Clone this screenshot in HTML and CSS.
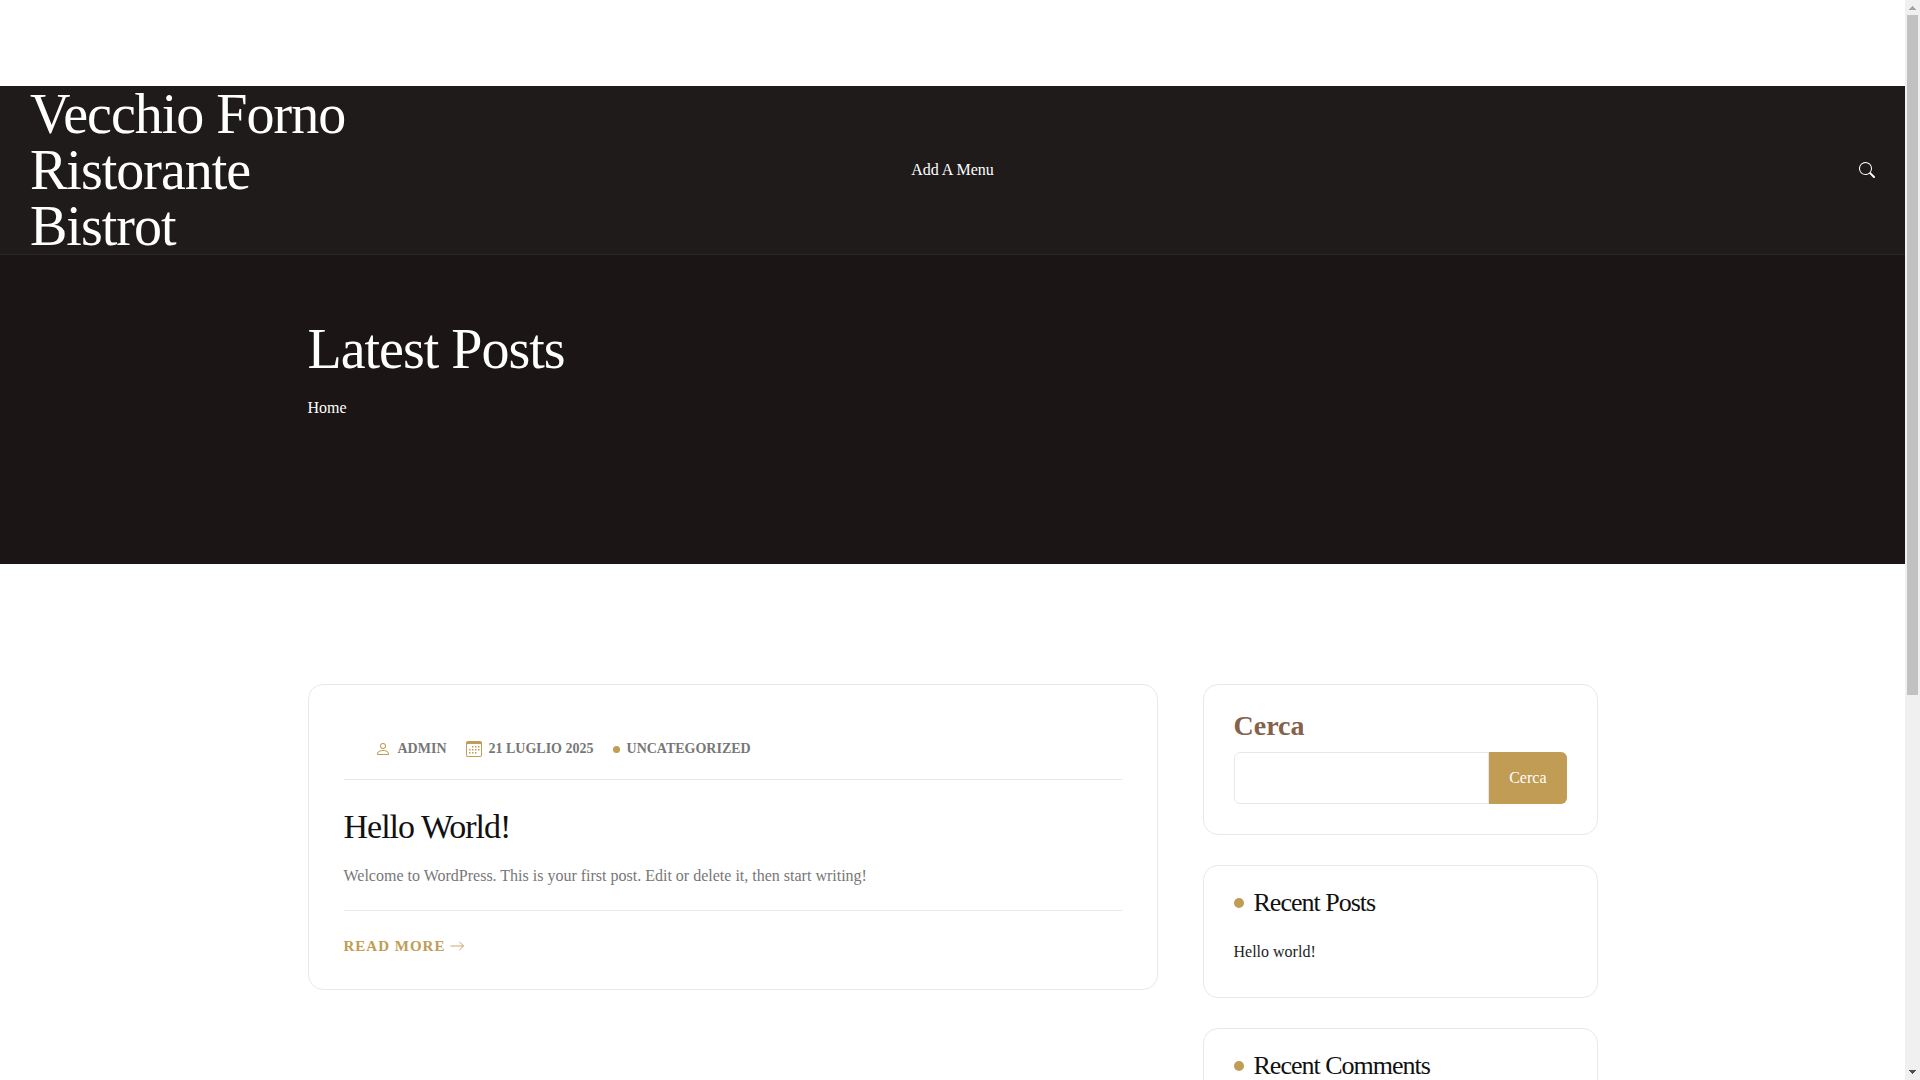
FILE: index.html
```html
<!DOCTYPE html>
<html lang="it">
    <head>
        <meta charset="UTF-8">
        <meta name="viewport" content="width=device-width, initial-scale=1">
        <title>Vecchio Forno Ristorante Bistrot</title>
        <link rel="stylesheet" href="styles.css">
    </head>
    <body>
        <div class="page">
            <header class="header">
                <div class="site-title"><a href="#">Vecchio Forno Ristorante Bistrot</a></div>
                <nav class="menu"><a href="#">Add A Menu</a></nav>
                <div class="header-tools">
                    <button class="search-toggle" type="button" aria-label="Search">
                        <svg width="16" height="16" viewBox="0 0 16 16" fill="currentColor"><path d="M11.742 10.344a6.5 6.5 0 1 0-1.397 1.398h-.001c.03.04.062.078.098.115l3.85 3.85a1 1 0 0 0 1.415-1.414l-3.85-3.85a1.007 1.007 0 0 0-.115-.1zM12 6.5a5.5 5.5 0 1 1-11 0 5.5 5.5 0 0 1 11 0z"/></svg>
                    </button>
                </div>
            </header>

            <section class="hero">
                <div class="container">
                    <h1>Latest Posts</h1>
                    <a href="#">Home</a>
                </div>
            </section>

            <div class="container content">
                <main>
                    <article class="post">
                        <ul class="meta">
                            <li>
                                <svg width="16" height="16" viewBox="0 0 16 16" fill="currentColor"><path d="M8 8a3 3 0 1 0 0-6 3 3 0 0 0 0 6zm2-3a2 2 0 1 1-4 0 2 2 0 0 1 4 0zm4 8c0 1-1 1-1 1H3s-1 0-1-1 1-4 6-4 6 3 6 4zm-1-.004c-.001-.246-.154-.986-.832-1.664C11.516 10.68 10.289 10 8 10c-2.29 0-3.516.68-4.168 1.332-.678.678-.83 1.418-.832 1.664h10z"/></svg>
                                <a href="#">admin</a>
                            </li>
                            <li>
                                <svg width="16" height="16" viewBox="0 0 16 16" fill="currentColor"><path d="M14 0H2a2 2 0 0 0-2 2v12a2 2 0 0 0 2 2h12a2 2 0 0 0 2-2V2a2 2 0 0 0-2-2zM1 3.857C1 3.384 1.448 3 2 3h12c.552 0 1 .384 1 .857v10.286c0 .473-.448.857-1 .857H2c-.552 0-1-.384-1-.857V3.857z"/><path d="M6 5h1.500v1.500H6zM9 5h1.500v1.500H9zM12 5h1.500v1.500H12zM3 8h1.500v1.500H3zM6 8h1.500v1.500H6zM9 8h1.500v1.500H9zM12 8h1.500v1.500H12zM3 11h1.500v1.500H3zM6 11h1.500v1.500H6zM9 11h1.500v1.500H9z"/></svg>
                                <a href="#">21 Luglio 2025</a>
                            </li>
                            <li class="category"><a href="#">Uncategorized</a></li>
                        </ul>
                        <h2><a href="#">Hello World!</a></h2>
                        <p>Welcome to WordPress. This is your first post. Edit or delete it, then start writing!</p>
                        <div class="post-footer">
                            <a class="read-more" href="#">Read More
                                <svg width="14" height="14" viewBox="0 0 16 16" fill="none" stroke="currentColor" stroke-linecap="round" stroke-linejoin="round"><path d="M1 8h14M11 3.500 15.500 8 11 12.500"/></svg>
                            </a>
                        </div>
                    </article>
                </main>

                <aside class="sidebar">
                    <section class="widget">
                        <form class="search">
                            <label for="search">Cerca</label>
                            <div class="search-row">
                                <input id="search" type="search" name="s">
                                <button type="submit">Cerca</button>
                            </div>
                        </form>
                    </section>
                    <section class="widget">
                        <h3>Recent Posts</h3>
                        <ul>
                            <li><a href="#">Hello world!</a></li>
                        </ul>
                    </section>
                    <section class="widget">
                        <h3>Recent Comments</h3>
                        <ul>
                            <li></li>
                        </ul>
                    </section>
                </aside>
            </div>
        </div>

        <div class="scrollbar" aria-hidden="true">
            <svg width="15" height="15" viewBox="0 0 15 15" fill="#a3a3a3" shape-rendering="crispEdges"><path d="M4 10h7V9h-1V8H9V7H8V6H7v1H6v1H5v1H4z"/></svg>
            <div class="track"><div class="thumb"></div></div>
            <svg width="15" height="15" viewBox="0 0 15 15" fill="#505050" shape-rendering="crispEdges"><path d="M4 5h7v1h-1v1H9v1H8v1H7V8H6V7H5V6H4z"/></svg>
        </div>
    </body>
</html>
```

FILE: styles.css
```css
* {
    box-sizing: border-box;
}
body {
    margin: 0;
    height: 100vh;
    display: grid;
    grid-template-columns: 1fr 15px;
    overflow: hidden;
    background: #fff;
    color: #777;
    font-family: "Liberation Serif", "Times New Roman", serif;
    font-size: 16px;
    line-height: 28px;
}
a {
    color: inherit;
    text-decoration: none;
}
h1, h2, h3, p, ul {
    margin: 0;
    padding: 0;
    font-weight: 400;
    list-style: none;
}
button, input {
    font: inherit;
}
svg {
    display: block;
    flex: none;
}
.page {
    height: 100vh;
    overflow: hidden;
    padding-top: 86px;
}
.container {
    width: 100%;
    max-width: 1320px;
    margin: 0 auto;
    padding: 0 15px;
}

/* header */
.header {
    display: grid;
    grid-template-columns: 1fr auto 1fr;
    align-items: center;
    padding: 0 30px;
    background: #1f1b1a;
    border-bottom: 1px solid #2b2727;
    color: #fff;
}
.site-title {
    max-width: 350px;
    font-size: 56px;
    line-height: 56px;
    letter-spacing: -1px;
}
.header-tools {
    display: flex;
    justify-content: flex-end;
}
.search-toggle {
    padding: 0;
    border: 0;
    background: none;
    color: #fff;
    cursor: pointer;
}
.hero {
    padding: 66px 0 142px;
    background: #1b1515;
    color: #fff;
}
.hero h1 {
    margin-bottom: 17px;
    font-size: 56px;
    line-height: 56px;
    letter-spacing: -1px;
}
.hero a {
    display: block;
}

/* posts */
.content {
    display: grid;
    grid-template-columns: 850fr 395fr;
    gap: 45px;
    align-items: start;
    padding-top: 120px;
}
.post {
    padding: 50px 35px 29px;
    border: 1px solid #e8e8e8;
    border-radius: 15px;
}
.meta {
    display: flex;
    align-items: center;
    gap: 19px;
    padding: 0 0 16px 31px;
    border-bottom: 1px solid #e8e8e8;
    font-size: 14px;
    font-weight: 700;
    text-transform: uppercase;
}
.meta li {
    display: flex;
    align-items: center;
    gap: 7px;
    font-weight: 700;
}
.meta svg {
    color: #c09c54;
}
.category::before {
    content: "";
    width: 7px;
    height: 7px;
    border-radius: 50%;
    background: #c09c54;
}
.post h2 {
    margin: 27px 0 15px;
    color: #111;
    font-size: 34px;
    line-height: 40px;
    letter-spacing: -1px;
}
.post-footer {
    margin-top: 20px;
    padding-top: 21px;
    border-top: 1px solid #e8e8e8;
}
.read-more {
    display: inline-flex;
    align-items: center;
    gap: 5px;
    color: #c09c54;
    font-size: 15px;
    font-weight: 700;
    letter-spacing: 1px;
    text-transform: uppercase;
}

/* sidebar */
.sidebar {
    display: grid;
    gap: 30px;
}
.widget {
    padding: 20px 30px 30px;
    border: 1px solid #e8e8e8;
    border-radius: 15px;
}
.search label {
    display: block;
    margin-bottom: 5px;
    color: #85624c;
    font-size: 28px;
    font-weight: 700;
    line-height: 42px;
}
.search-row {
    display: flex;
}
.search input {
    flex: 1;
    min-width: 0;
    height: 52px;
    padding: 0 15px;
    border: 1px solid #e8e8e8;
    border-radius: 6px 0 0 6px;
    outline: 0;
    background: #fff;
    appearance: none;
}
.search button {
    padding: 0 20px;
    border: 0;
    border-radius: 0 6px 6px 0;
    background: #c09c54;
    color: #fff;
    cursor: pointer;
}
.widget h3 {
    display: flex;
    align-items: center;
    gap: 10px;
    margin-bottom: 18px;
    color: #111;
    font-size: 26px;
    line-height: 34px;
    letter-spacing: -1px;
}
.widget h3::before {
    content: "";
    width: 10px;
    height: 10px;
    border-radius: 50%;
    background: #c09c54;
}
.widget li {
    min-height: 29px;
    color: #222;
}

/* scrollbar */
.scrollbar {
    display: flex;
    flex-direction: column;
    background: #f0f0f0;
}
.track {
    flex: 1;
    padding: 0 2px;
}
.thumb {
    height: 680px;
    background: #c1c1c1;
}
```
